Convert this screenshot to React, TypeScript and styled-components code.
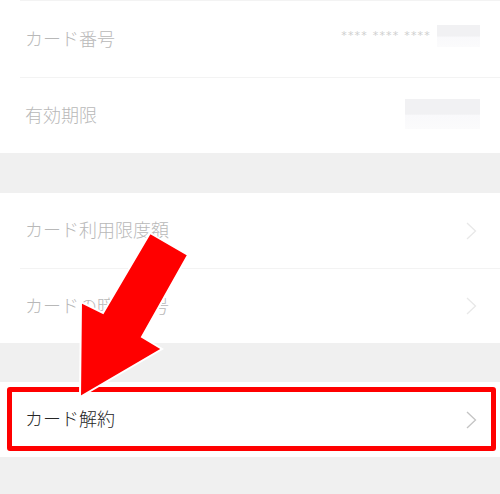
import React from 'react';
import styled, { createGlobalStyle } from 'styled-components';

const GlobalStyle = createGlobalStyle`
  html, body {
    margin: 0;
    padding: 0;
    background: #f0f0f0;
    font-family: 'Noto Sans CJK JP', 'Noto Sans', sans-serif;
  }
`;

const Page = styled.div`
  position: relative;
  width: 500px;
  height: 494px;
  overflow: hidden;
  background: #f0f0f0;
  display: flex;
  flex-direction: column;
`;

const Section = styled.div<{ $gap: number }>`
  position: relative;
  background: #fff;
  margin-bottom: ${({ $gap }) => $gap}px;
`;

const Row = styled.div<{ $h: number; $line?: boolean; $pr?: number }>`
  height: ${({ $h }) => $h}px;
  margin-left: 20px;
  padding: 0 ${({ $pr }) => $pr ?? 23}px 3px 5px;
  box-sizing: border-box;
  display: flex;
  align-items: center;
  justify-content: space-between;
  border-top: ${({ $line }) => ($line ? '1px solid #f3f3f3' : 'none')};
`;

const Label = styled.span<{ $active?: boolean }>`
  font-size: 18px;
  font-weight: 300;
  line-height: 1;
  color: ${({ $active }) => ($active ? '#262626' : '#b8b8b8')};
`;

const Masked = styled.div`
  display: flex;
  align-items: center;
  gap: 6px;
  margin-top: -4px;
`;

const Stars = styled.span`
  font-family: 'DejaVu Sans', sans-serif;
  font-size: 11px;
  letter-spacing: 1.2px;
  color: #cfcfcf;
`;

const Blur = styled.div<{ $w: number; $h: number }>`
  width: ${({ $w }) => $w}px;
  height: ${({ $h }) => $h}px;
  background: linear-gradient(#f1f1f3 0%, #f1f1f3 50%, #f9f9fb 55%, #fbfbfc 100%);
`;

const Highlight = styled.div`
  position: absolute;
  top: 5px;
  left: 7px;
  right: 4px;
  bottom: 6px;
  border: 5px solid #ff0000;
  border-radius: 3px;
  pointer-events: none;
`;

const ArrowLayer = styled.svg`
  position: absolute;
  left: 0;
  top: 0;
  pointer-events: none;
`;

const Chevron = ({ active }: { active?: boolean }) => (
  <svg width="11" height="18" viewBox="0 0 11 18" style={{ marginTop: 3 }}>
    <path d="M1 1 L9.5 9 L1 17" fill="none" stroke={active ? '#c4c4c4' : '#e8e8e8'} strokeWidth="1.3" />
  </svg>
);

export default function App() {
  return (
    <>
      <GlobalStyle />
      <Page>
        <Section $gap={40}>
          <Row $h={77} $line $pr={20}>
            <Label>カード番号</Label>
            <Masked>
              <Stars>**** **** ****</Stars>
              <Blur $w={43} $h={22} />
            </Masked>
          </Row>
          <Row $h={76} $line $pr={20}>
            <Label>有効期限</Label>
            <Blur $w={75} $h={30} />
          </Row>
        </Section>
        <Section $gap={39}>
          <Row $h={75}>
            <Label>カード利用限度額</Label>
            <Chevron />
          </Row>
          <Row $h={75} $line>
            <Label>カードの暗証番号</Label>
            <Chevron />
          </Row>
        </Section>
        <Section $gap={0}>
          <Row $h={75}>
            <Label $active>カード解約</Label>
            <Chevron active />
          </Row>
          <Highlight />
        </Section>
        <ArrowLayer width="500" height="494" viewBox="0 0 500 494">
          <polygon
            points="150,233 188,255 142,337 162,349 80,397 81,302 103,313"
            fill="#ff0000"
            stroke="#ffffff"
            strokeWidth="2"
            strokeLinejoin="miter"
          />
        </ArrowLayer>
      </Page>
    </>
  );
}
